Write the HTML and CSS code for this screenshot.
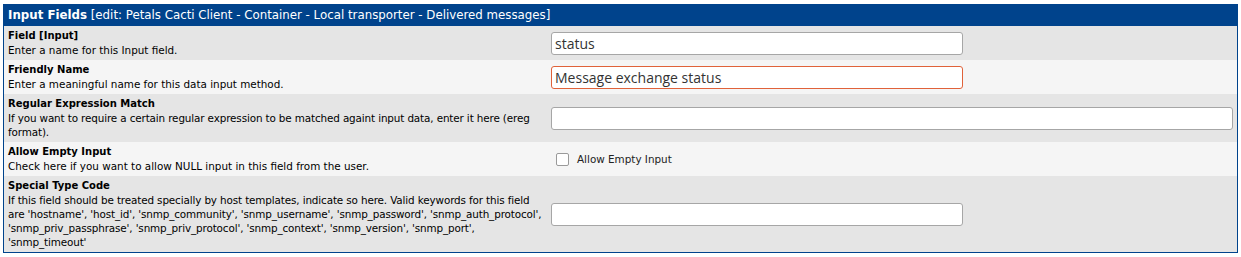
FILE: index.html
```html
<!DOCTYPE html>
<html>
<head>
<meta charset="utf-8">
<link rel="stylesheet" href="styles.css">
</head>
<body>
<div class="panel">
  <div class="hdr"><b>Input Fields</b> [edit: Petals Cacti Client - Container - Local transporter - Delivered messages]</div>
  <div class="row odd">
    <div class="lbl"><div class="ttl">Field [Input]</div><div class="desc">Enter a name for this Input field.</div></div>
    <div class="ctl"><input class="txt short" type="text" value="status"></div>
  </div>
  <div class="row even">
    <div class="lbl"><div class="ttl">Friendly Name</div><div class="desc">Enter a meaningful name for this data input method.</div></div>
    <div class="ctl"><input class="txt short focus" type="text" value="Message exchange status"></div>
  </div>
  <div class="row odd">
    <div class="lbl"><div class="ttl">Regular Expression Match</div><div class="desc nw">If you want to require a certain regular expression to be matched againt input data, enter it here (ereg<br>format).</div></div>
    <div class="ctl"><input class="txt long" type="text" value=""></div>
  </div>
  <div class="row even">
    <div class="lbl"><div class="ttl">Allow Empty Input</div><div class="desc">Check here if you want to allow NULL input in this field from the user.</div></div>
    <div class="ctl"><label class="chk"><span class="box"></span>Allow Empty Input</label></div>
  </div>
  <div class="row odd">
    <div class="lbl"><div class="ttl">Special Type Code</div><div class="desc nw">If this field should be treated specially by host templates, indicate so here. Valid keywords for this field<br>are 'hostname', 'host_id', 'snmp_community', 'snmp_username', 'snmp_password', 'snmp_auth_protocol',<br>'snmp_priv_passphrase', 'snmp_priv_protocol', 'snmp_context', 'snmp_version', 'snmp_port',<br>'snmp_timeout'</div></div>
    <div class="ctl"><input class="txt short" type="text" value=""></div>
  </div>
</div>
</body>
</html>
```
FILE: styles.css
```css
html, body { margin: 0; padding: 0; background: #ffffff; }
body { padding: 4px 3px 0 3px; font-family: "DejaVu Sans", Verdana, sans-serif; font-size: 10.4px; color: #000; }
.panel { border: 1px solid #00438C; border-top: 0; width: 1233px; }
.hdr { background: #00438C; color: #fff; height: 22px; line-height: 22px; padding-left: 4px; font-size: 11.8px; white-space: nowrap; }
.hdr b { font-weight: bold; }
.row { display: grid; grid-template-columns: 546px 1fr; }
.odd { background: #E5E5E5; }
.even { background: #F5F5F5; }
.lbl { padding: 3px 2px 3px 4px; line-height: 14px; min-width: 0; }
.ttl { font-weight: bold; font-size: 10px; }
.nw { white-space: nowrap; letter-spacing: -0.13px; }
.ctl { display: flex; align-items: center; padding-left: 1px; }
.txt { box-sizing: border-box; height: 23px; border: 1px solid #A6A6A6; border-radius: 3px; background: #fff; font-family: "Open Sans", "Noto Sans", sans-serif; font-size: 14px; padding: 0 3px; color: #333; outline: none; margin: 0; }
.short { width: 412px; }
.long { width: 682px; }
.focus { border-color: #E0623A; }
.chk { display: flex; align-items: center; font-size: 10.4px; color: #222; }
.box { width: 11px; height: 11px; border: 1px solid #9A9A9A; border-radius: 2px; background: #fff; margin: 0 8px 0 5px; }
```
